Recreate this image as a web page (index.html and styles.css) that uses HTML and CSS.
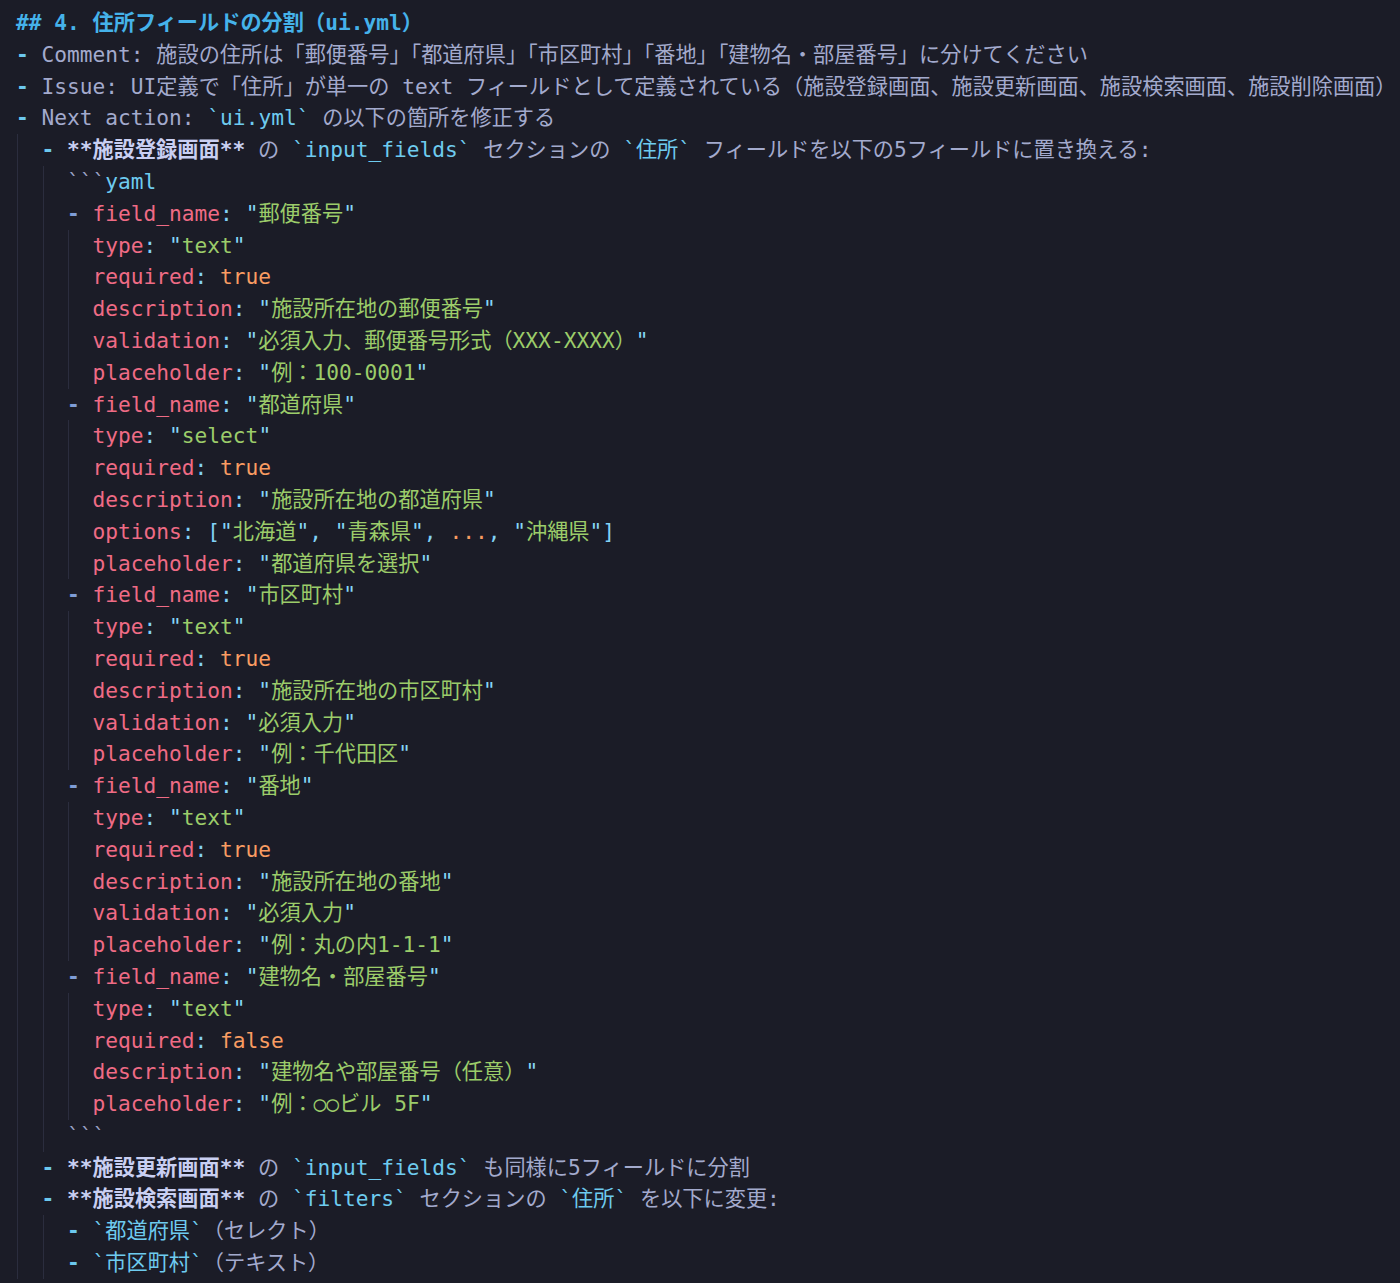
FILE: index.html
```html
<!DOCTYPE html>
<html lang="ja">
<head>
<meta charset="utf-8">
<title>ui.yml review</title>
<link rel="stylesheet" href="styles.css">
</head>
<body>
<main class="editor">
<div class="line h">## 4. 住所フィールドの分割（ui.yml）</div>
<div class="line"><span class="d">-</span> Comment: 施設の住所は「郵便番号」「都道府県」「市区町村」「番地」「建物名・部屋番号」に分けてください</div>
<div class="line"><span class="d">-</span> Issue: UI定義で「住所」が単一の text フィールドとして定義されている（施設登録画面、施設更新画面、施設検索画面、施設削除画面）</div>
<div class="line"><span class="d">-</span> Next action: <span class="c">`ui.yml`</span> の以下の箇所を修正する</div>
<div class="indent">
<div class="line"><span class="d">-</span> <span class="b">**施設登録画面**</span> の <span class="c">`input_fields`</span> セクションの <span class="c">`住所`</span> フィールドを以下の5フィールドに置き換える:</div>
<div class="indent">
<div class="line"><span class="f">```</span><span class="c">yaml</span></div>
<div class="line"><span class="y">-</span> <span class="k">field_name</span><span class="p">:</span> <span class="q">"</span><span class="s">郵便番号</span><span class="q">"</span></div>
<div class="indent">
<div class="line"><span class="k">type</span><span class="p">:</span> <span class="q">"</span><span class="s">text</span><span class="q">"</span></div>
<div class="line"><span class="k">required</span><span class="p">:</span> <span class="o">true</span></div>
<div class="line"><span class="k">description</span><span class="p">:</span> <span class="q">"</span><span class="s">施設所在地の郵便番号</span><span class="q">"</span></div>
<div class="line"><span class="k">validation</span><span class="p">:</span> <span class="q">"</span><span class="s">必須入力、郵便番号形式（XXX-XXXX）</span><span class="q">"</span></div>
<div class="line"><span class="k">placeholder</span><span class="p">:</span> <span class="q">"</span><span class="s">例：100-0001</span><span class="q">"</span></div>
</div>
<div class="line"><span class="y">-</span> <span class="k">field_name</span><span class="p">:</span> <span class="q">"</span><span class="s">都道府県</span><span class="q">"</span></div>
<div class="indent">
<div class="line"><span class="k">type</span><span class="p">:</span> <span class="q">"</span><span class="s">select</span><span class="q">"</span></div>
<div class="line"><span class="k">required</span><span class="p">:</span> <span class="o">true</span></div>
<div class="line"><span class="k">description</span><span class="p">:</span> <span class="q">"</span><span class="s">施設所在地の都道府県</span><span class="q">"</span></div>
<div class="line"><span class="k">options</span><span class="p">:</span> <span class="p">[</span><span class="q">"</span><span class="s">北海道</span><span class="q">"</span><span class="p">,</span> <span class="q">"</span><span class="s">青森県</span><span class="q">"</span><span class="p">,</span> <span class="o">...</span><span class="p">,</span> <span class="q">"</span><span class="s">沖縄県</span><span class="q">"</span><span class="p">]</span></div>
<div class="line"><span class="k">placeholder</span><span class="p">:</span> <span class="q">"</span><span class="s">都道府県を選択</span><span class="q">"</span></div>
</div>
<div class="line"><span class="y">-</span> <span class="k">field_name</span><span class="p">:</span> <span class="q">"</span><span class="s">市区町村</span><span class="q">"</span></div>
<div class="indent">
<div class="line"><span class="k">type</span><span class="p">:</span> <span class="q">"</span><span class="s">text</span><span class="q">"</span></div>
<div class="line"><span class="k">required</span><span class="p">:</span> <span class="o">true</span></div>
<div class="line"><span class="k">description</span><span class="p">:</span> <span class="q">"</span><span class="s">施設所在地の市区町村</span><span class="q">"</span></div>
<div class="line"><span class="k">validation</span><span class="p">:</span> <span class="q">"</span><span class="s">必須入力</span><span class="q">"</span></div>
<div class="line"><span class="k">placeholder</span><span class="p">:</span> <span class="q">"</span><span class="s">例：千代田区</span><span class="q">"</span></div>
</div>
<div class="line"><span class="y">-</span> <span class="k">field_name</span><span class="p">:</span> <span class="q">"</span><span class="s">番地</span><span class="q">"</span></div>
<div class="indent">
<div class="line"><span class="k">type</span><span class="p">:</span> <span class="q">"</span><span class="s">text</span><span class="q">"</span></div>
<div class="line"><span class="k">required</span><span class="p">:</span> <span class="o">true</span></div>
<div class="line"><span class="k">description</span><span class="p">:</span> <span class="q">"</span><span class="s">施設所在地の番地</span><span class="q">"</span></div>
<div class="line"><span class="k">validation</span><span class="p">:</span> <span class="q">"</span><span class="s">必須入力</span><span class="q">"</span></div>
<div class="line"><span class="k">placeholder</span><span class="p">:</span> <span class="q">"</span><span class="s">例：丸の内1-1-1</span><span class="q">"</span></div>
</div>
<div class="line"><span class="y">-</span> <span class="k">field_name</span><span class="p">:</span> <span class="q">"</span><span class="s">建物名・部屋番号</span><span class="q">"</span></div>
<div class="indent">
<div class="line"><span class="k">type</span><span class="p">:</span> <span class="q">"</span><span class="s">text</span><span class="q">"</span></div>
<div class="line"><span class="k">required</span><span class="p">:</span> <span class="o">false</span></div>
<div class="line"><span class="k">description</span><span class="p">:</span> <span class="q">"</span><span class="s">建物名や部屋番号（任意）</span><span class="q">"</span></div>
<div class="line"><span class="k">placeholder</span><span class="p">:</span> <span class="q">"</span><span class="s">例：○○ビル 5F</span><span class="q">"</span></div>
</div>
<div class="line"><span class="f">```</span></div>
</div>
<div class="line"><span class="d">-</span> <span class="b">**施設更新画面**</span> の <span class="c">`input_fields`</span> も同様に5フィールドに分割</div>
<div class="line"><span class="d">-</span> <span class="b">**施設検索画面**</span> の <span class="c">`filters`</span> セクションの <span class="c">`住所`</span> を以下に変更:</div>
<div class="indent">
<div class="line"><span class="d">-</span> <span class="c">`都道府県`</span>（セレクト）</div>
<div class="line"><span class="d">-</span> <span class="c">`市区町村`</span>（テキスト）</div>
</div>
</div>
</main>
</body>
</html>
```

FILE: styles.css
```css
html, body {
  margin: 0;
  padding: 0;
  background: #1b1c27;
}

.editor {
  min-height: 1283px;
  box-sizing: border-box;
  padding: 7px 0 0 16px;
  font-family: "DejaVu Sans Mono", "Noto Sans CJK JP", monospace;
  font-size: 21.2px;
  line-height: 31.8px;
  color: #a3aacd;
  background: #1b1c27;
}

.line {
  white-space: pre;
  height: 31.8px;
}

.indent {
  margin-left: 1px;
  border-left: 1px solid #2b2d3e;
  padding-left: calc(2ch - 2px);
}

.h {
  color: #45b2ea;
  font-weight: bold;
}

.d { color: #6cc8ee; font-weight: bold; }
.b { color: #c9cff2; font-weight: bold; }
.c { color: #6ecbef; }
.f { color: #9aa1c4; }
.k { color: #ef6b85; }
.p { color: #82d2f6; }
.q { color: #86d6f6; }
.s { color: #9ccc6a; }
.o { color: #f99c62; }
.y { color: #7f9dd6; font-weight: bold; }
```
